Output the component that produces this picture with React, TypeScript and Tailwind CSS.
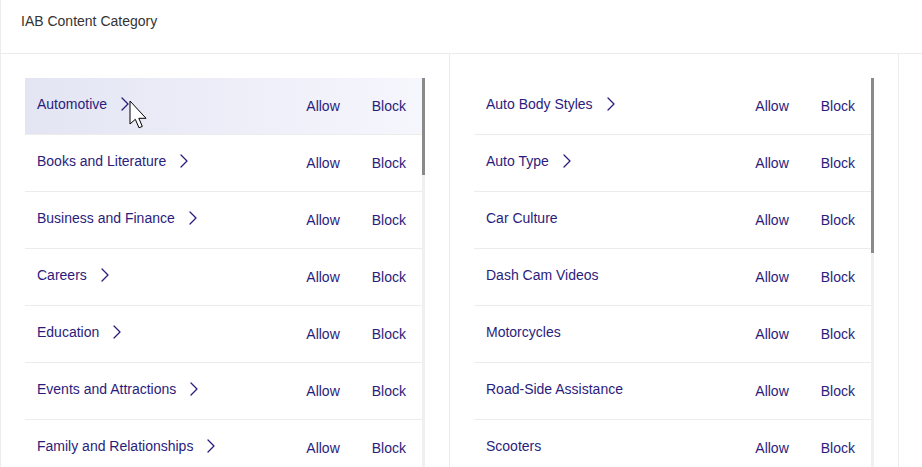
import { ChevronRight } from "lucide-react";

const left = [
  { name: "Automotive", sub: true },
  { name: "Books and Literature", sub: true },
  { name: "Business and Finance", sub: true },
  { name: "Careers", sub: true },
  { name: "Education", sub: true },
  { name: "Events and Attractions", sub: true },
  { name: "Family and Relationships", sub: true },
];

const right = [
  { name: "Auto Body Styles", sub: true },
  { name: "Auto Type", sub: true },
  { name: "Car Culture", sub: false },
  { name: "Dash Cam Videos", sub: false },
  { name: "Motorcycles", sub: false },
  { name: "Road-Side Assistance", sub: false },
  { name: "Scooters", sub: false },
];

function Row({ name, sub, active }: { name: string; sub: boolean; active?: boolean }) {
  return (
    <div
      className={`relative flex items-center h-[57px] shrink-0 border-b border-[#ececec] pl-3 pr-4 ${
        active ? "bg-gradient-to-r from-[#e3e5f3] to-[#f6f6fd]" : "bg-white"
      }`}
    >
      <div className="flex items-center gap-[6px] -mt-[4px] flex-1 text-[14px] text-[#2b1c7c]">
        <span>{name}</span>
        {sub && <ChevronRight size={24} strokeWidth={1.3} className="text-[#2b1c7c]" />}
      </div>
      <div className="flex items-center gap-8 text-[14px] text-[#2b1c7c]">
        <span>Allow</span>
        <span>Block</span>
      </div>
      {active && (
        <svg
          className="absolute left-[104px] top-[22px]"
          width="22"
          height="32"
          viewBox="0 0 22 32"
        >
          <path
            d="M1 1 L1 24 L6.3 19.3 L10 27.8 L13.3 26.4 L9.8 18.3 L17 18.3 Z"
            fill="#fff"
            stroke="#000"
            strokeWidth="1"
            strokeLinejoin="miter"
          />
        </svg>
      )}
    </div>
  );
}

function Panel({
  items,
  thumb,
  hover,
}: {
  items: { name: string; sub: boolean }[];
  thumb: string;
  hover?: boolean;
}) {
  return (
    <div className="w-[449px] shrink-0 border-r border-[#ececec] pt-6 pl-6 pr-6 flex overflow-hidden">
      <div className="flex flex-1 min-w-0">
        <div className="flex flex-col flex-1 min-w-0">
          {items.map((it, i) => (
            <Row key={it.name} name={it.name} sub={it.sub} active={hover && i === 0} />
          ))}
        </div>
        <div className="w-[3px] bg-[#f0f0f0] flex flex-col">
          <div className={`${thumb} bg-[#8a8a8a]`} />
        </div>
      </div>
    </div>
  );
}

export default function App() {
  return (
    <div
      className="h-[467px] w-full overflow-hidden bg-white border-l border-[#ececec] flex flex-col"
      style={{ fontFamily: '"Liberation Sans", Arial, sans-serif' }}
    >
      <div className="h-[54px] shrink-0 border-b border-[#ececec] px-5 flex items-start pt-[11px]">
        <span className="text-[14px] text-[#333]">IAB Content Category</span>
      </div>
      <div className="flex flex-1 min-h-0">
        <Panel items={left} thumb="h-[97px]" hover />
        <Panel items={right} thumb="h-[175px]" />
      </div>
    </div>
  );
}
